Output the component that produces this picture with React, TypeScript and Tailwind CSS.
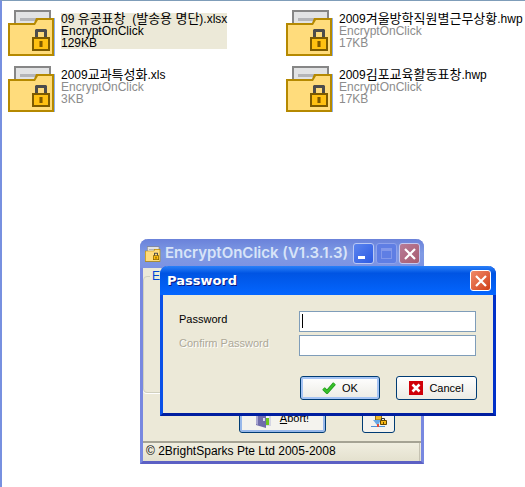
import React from 'react';

interface EncryptedFile {
  name: string;
  size: string;
  selected?: boolean;
}

const files: EncryptedFile[] = [
  { name: '09 유공표창  (발송용 명단).xlsx', size: '129KB', selected: true },
  { name: '2009겨울방학직원별근무상황.hwp', size: '17KB' },
  { name: '2009교과특성화.xls', size: '3KB' },
  { name: '2009김포교육활동표창.hwp', size: '17KB' },
];

const FolderIcon: React.FC<{ className?: string }> = ({ className }) => (
  <svg viewBox="0 0 48 46" className={className} aria-hidden="true">
    <rect x="46" y="8" width="1" height="38" fill="#8ab0f0" />
    <rect x="6" y="0" width="37" height="16" fill="#868686" />
    <rect x="8" y="2" width="33" height="14" fill="#e2e3e4" />
    <rect x="12" y="8" width="25" height="3" fill="#b4b5b8" />
    <path d="M0 13h26l2-5h18v38H0z" fill="#b58900" />
    <path d="M2 15h25l3-5h14v34H2z" fill="#ffdc7c" />
    <path d="M27 28v-8l1-1h10l1 1v8h-3v-6h-6v6z" fill="#4c4c4c" />
    <rect x="24" y="27" width="18" height="14" fill="#7d5b00" />
    <rect x="26" y="29" width="14" height="10" fill="#ffc112" />
    <rect x="31" y="31" width="4" height="6" fill="#c08600" />
    <rect x="32" y="31" width="2" height="6" fill="#7d5b00" />
  </svg>
);

// Hangul is set one pixel larger than the Latin text around it
const FileName: React.FC<{ name: string }> = ({ name }) => (
  <div className="h-3 text-black">
    {name.split(/([가-힣]+)/).map((part, index) =>
      index % 2 === 1 ? (
        <span key={index} className="text-[13px] leading-3">
          {part}
        </span>
      ) : (
        part
      )
    )}
  </div>
);

const FileTile: React.FC<{ file: EncryptedFile }> = ({ file }) => (
  <div className="flex h-12 items-start gap-[5px]">
    <FolderIcon className="h-[46px] w-12 shrink-0" />
    <div
      className={`mt-[3px] whitespace-pre text-xs leading-3 ${
        file.selected ? 'bg-[#ece9d8] text-black' : 'text-[#8c8c8c]'
      }`}
    >
      <FileName name={file.name} />
      <div>EncryptOnClick</div>
      <div>{file.size}</div>
    </div>
  </div>
);

const CloseGlyph = () => (
  <svg viewBox="0 0 12 12" className="h-3 w-3" aria-hidden="true">
    <path d="M1 1l10 10M11 1L1 11" stroke="#fff" strokeWidth="2.2" />
  </svg>
);

const DoorIcon = () => (
  <svg viewBox="0 0 16 18" className="h-[18px] w-4" aria-hidden="true">
    <path d="M9 0h6v16H9z" fill="#d5d5e4" />
    <path d="M10 0h3v14h-3z" fill="#f4f4fa" />
    <path d="M10 8h3v7h-3z" fill="#6cc81e" />
    <path d="M0 0h9l1 1v17l-10-3z" fill="#6f6cab" />
    <path d="M0 0h2v15l-2-1z" fill="#a9a7d2" />
    <path d="M7 8h2v3H7z" fill="#d6d4f0" />
  </svg>
);

const NetworkLockIcon = () => (
  <svg viewBox="0 0 16 16" className="h-4 w-4" aria-hidden="true">
    <path d="M4.5 0h6v8h-6z" fill="#f0b92a" stroke="#8f6a10" />
    <path d="M2 8h8l-3 5H6z" fill="#67a8e4" />
    <path d="M0 14.5h14" stroke="#4a90d8" />
    <path d="M6 12h2v3H6z" fill="#e04c3c" />
    <path d="M10.5 9V6.5h3V9" fill="none" stroke="#333" />
    <path d="M9.5 8.5h6v4h-6z" fill="#f7b816" stroke="#624600" />
    <path d="M12 10h1v2h-1z" fill="#624600" />
  </svg>
);

const CheckIcon = () => (
  <svg viewBox="0 0 14 12" className="h-3 w-3.5" aria-hidden="true">
    <path d="M1.5 6.500l3.5 3.500L12.500 1.500" fill="none" stroke="#1f9a1a" strokeWidth="3.6" />
    <path d="M1.500 6.500l3.500 3.500L12.500 1.500" fill="none" stroke="#38c02a" strokeWidth="2" />
  </svg>
);

const CancelIcon = () => (
  <svg viewBox="0 0 14 14" className="h-3.5 w-3.5" aria-hidden="true">
    <rect width="14" height="14" fill="#d00008" />
    <path d="M3.500 3.500l7 7M10.500 3.500l-7 7" stroke="#fff" strokeWidth="2.6" />
  </svg>
);

const MainWindow = () => (
  <section className="absolute left-[138px] top-[238px] flex h-[225px] w-[284px] flex-col rounded-t-lg border-x-[3px] border-b-[3px] border-[#7888e0] border-b-[#5c60c4] bg-[#ece9d8]">
    <header className="-mx-[3px] flex h-[29px] shrink-0 items-center rounded-t-lg bg-linear-to-b from-[#6a82da] via-[#7f9ae4] to-[#7d92e2] pl-[5px] pr-1">
      <FolderIcon className="h-4 w-4 shrink-0" />
      <h1 className="ml-1 flex-1 whitespace-nowrap font-['Inter'] text-[15px] font-semibold text-[#d8e4f8]">
        EncryptOnClick (V1.3.1.3)
      </h1>
      <div className="flex gap-0.5">
        <button aria-label="Minimize" className="flex h-[21px] w-[21px] items-end rounded-[3px] border border-[#b9c8f5] bg-linear-to-br from-[#5c84ee] to-[#2c5ae4] p-1">
          <span className="h-[3px] w-[7px] bg-white" />
        </button>
        <button aria-label="Maximize" disabled className="flex h-[21px] w-[21px] items-center justify-center rounded-[3px] border border-[#8ea2ec] bg-[#5f7ee4]">
          <span className="h-[11px] w-[11px] border border-t-[3px] border-[#8298ea]" />
        </button>
        <button aria-label="Close" className="flex h-[21px] w-[21px] items-center justify-center rounded-[3px] border border-[#c4c8f0] bg-linear-to-br from-[#b87c98] to-[#a85c70]">
          <CloseGlyph />
        </button>
      </div>
    </header>
    <fieldset className="mt-0.5 h-[123px] shrink-0 rounded border border-[#d0d0bf] px-1.5 shadow-[0_1px_0_#fff]">
      <legend className="px-0.5 text-xs leading-3 text-[#0046d5]">Encrypt</legend>
    </fieldset>
    <div className="flex flex-1 items-end justify-between pb-2 pl-24 pr-[26px]">
      <button className="flex h-8 w-[87px] items-end justify-center gap-2 rounded-[3px] border border-[#003c74] bg-[#f4f3ee] pb-1 shadow-[inset_0_0_0_2px_#98b8ea]">
        <DoorIcon />
        <span className="pb-0.5">
          <u>A</u>bort!
        </span>
      </button>
      <button aria-label="Network lock" className="flex h-8 w-[33px] items-end justify-center rounded-[3px] border border-[#003c74] bg-[#f4f3ee] pb-1">
        <NetworkLockIcon />
      </button>
    </div>
    <footer className="flex h-5 shrink-0 border-t-2 border-[#a5a394] bg-linear-to-b from-[#f0eee0] to-[#e4e1ce] pl-[3px] pr-px text-xs leading-[17px]">
      <span className="flex-1 border-r border-[#c5c2b2]">© 2BrightSparks Pte Ltd 2005-2008</span>
    </footer>
  </section>
);

const PasswordDialog = () => (
  <form
    onSubmit={(e) => e.preventDefault()}
    className="absolute left-[158px] top-[265px] w-[336px] rounded-t-lg border-x-[3px] border-b-[3px] border-[#0a50e8] border-r-[#0030c8] border-b-[#001ea0] bg-[#ece9d8]"
  >
    <header className="-mx-[3px] flex h-[29px] items-center justify-between rounded-t-lg bg-linear-to-b from-[#2a80f8] via-[#0054e3] via-25% to-[#0466ff] pl-[7px] pr-[5px]">
      <h2 className="font-['DejaVu_Sans'] text-[13px] font-bold text-white [text-shadow:1px_1px_0_#0a1883]">Password</h2>
      <button type="button" aria-label="Close" className="flex h-[21px] w-[21px] items-center justify-center rounded-[3px] border border-white bg-linear-to-br from-[#f08a68] to-[#d03c10]">
        <CloseGlyph />
      </button>
    </header>
    <div className="flex flex-col gap-[3px] pl-4 pr-[17px] pt-4">
      <div className="flex items-start justify-between">
        <label htmlFor="password" className="leading-4">Password</label>
        <div className="relative flex">
          <input id="password" type="text" className="h-[21px] w-[177px] border border-[#7f9db9] bg-white px-0.5 outline-none" />
          <span className="pointer-events-none absolute left-[3px] top-[3px] h-3.5 w-px bg-black" />
        </div>
      </div>
      <div className="flex items-start justify-between">
        <label htmlFor="confirm" className="leading-4 text-[#aca899] [text-shadow:1px_1px_0_#fff]">Confirm Password</label>
        <input id="confirm" type="text" className="h-[21px] w-[177px] border border-[#7f9db9] bg-white px-0.5 outline-none" />
      </div>
    </div>
    <div className="flex justify-end gap-4 pb-[13px] pr-4 pt-5">
      <button className="flex h-6 w-20 items-center justify-center gap-1.5 rounded-[3px] border border-[#003c74] bg-linear-to-b from-white to-[#ecebe4] shadow-[inset_0_0_0_2px_#a6c4f4]">
        <CheckIcon />
        OK
      </button>
      <button type="button" className="flex h-6 w-[81px] items-center justify-center gap-1.5 rounded-[3px] border border-[#003c74] bg-linear-to-b from-white to-[#ecebe4]">
        <CancelIcon />
        Cancel
      </button>
    </div>
  </form>
);

const App: React.FC = () => (
  <main className="relative min-h-screen overflow-hidden border-l-2 border-t border-l-[#7790e0] border-t-[#7f9db9] bg-white pl-1.5 pt-[9px] font-['Liberation_Sans','Noto_Sans_CJK_KR',sans-serif] text-black">
    <div className="grid grid-cols-[278px_1fr] gap-y-2">
      {files.map((file) => (
        <FileTile key={file.name} file={file} />
      ))}
    </div>
    <div className="text-[11px]">
      <MainWindow />
      <PasswordDialog />
    </div>
  </main>
);

export default App;
